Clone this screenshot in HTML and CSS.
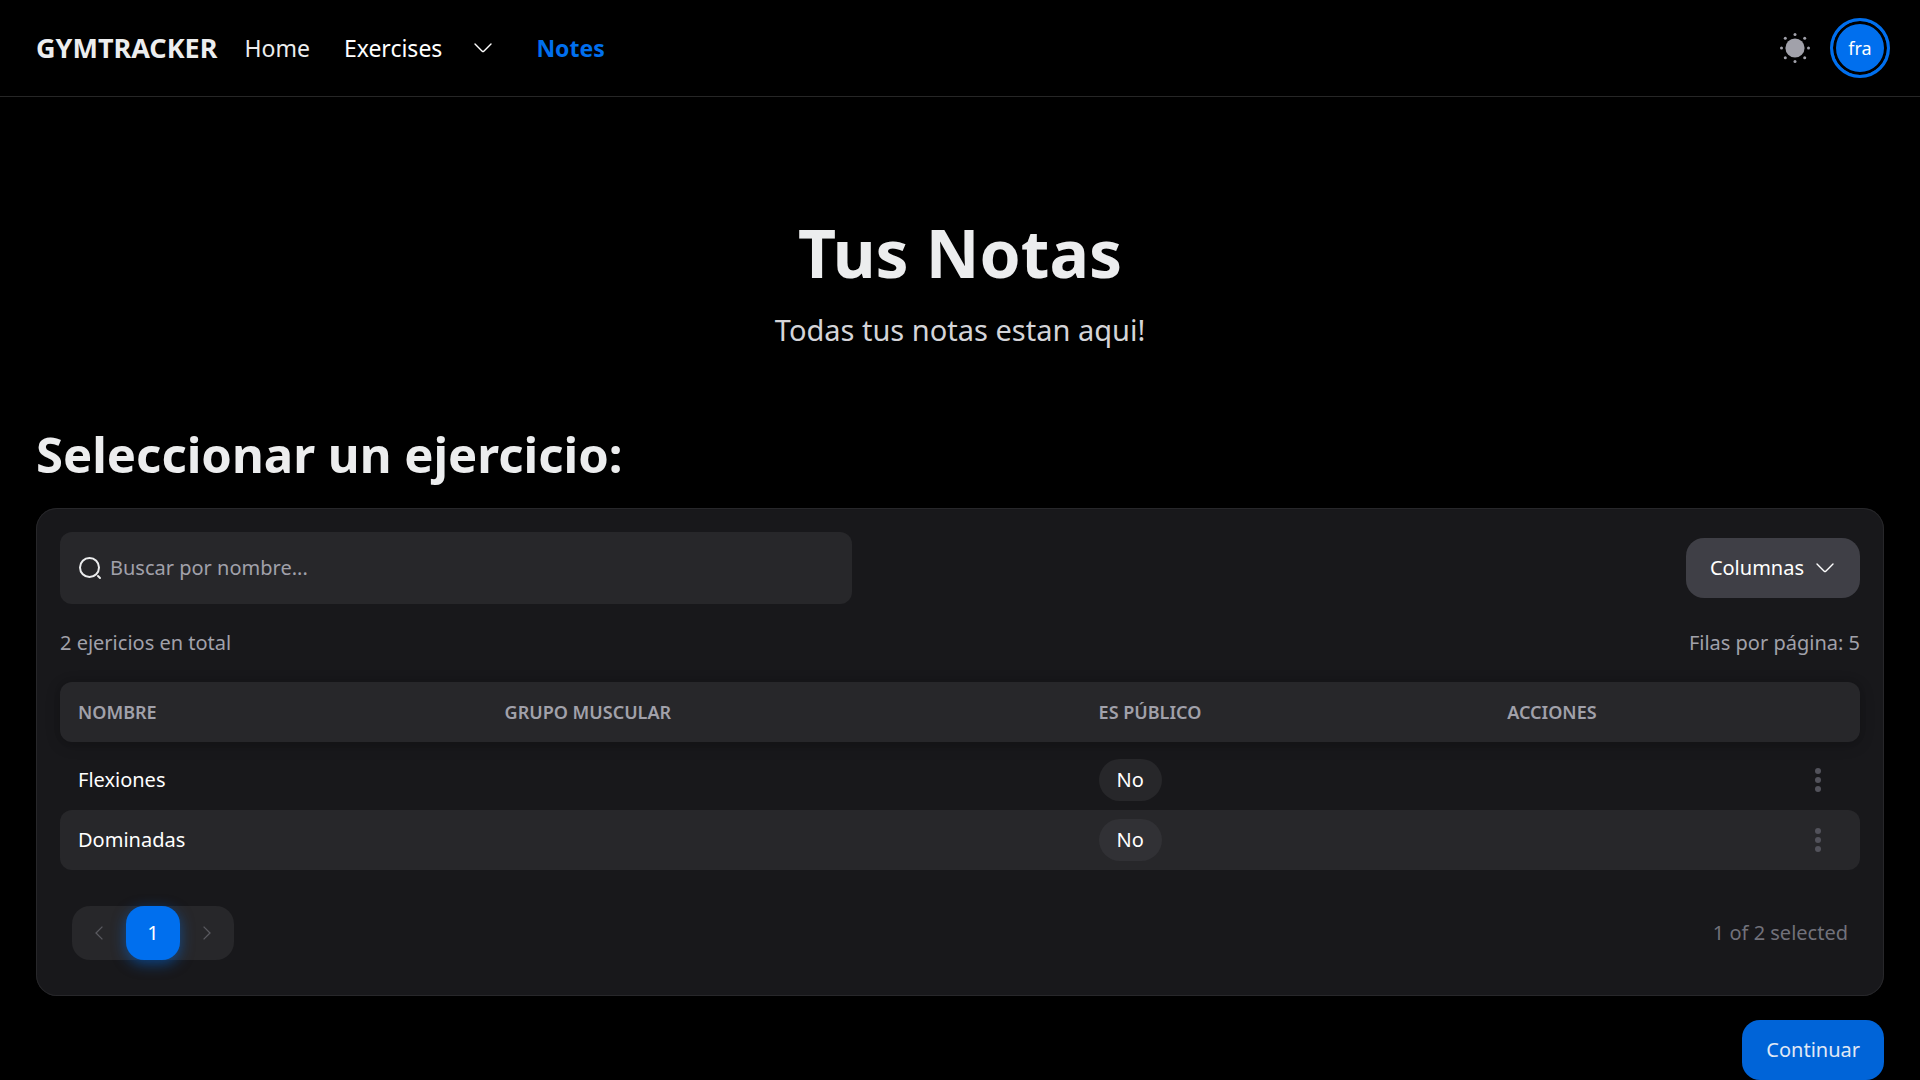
FILE: index.html
```html
<!DOCTYPE html>
<html lang="es">
<head>
<meta charset="utf-8">
<meta name="viewport" content="width=device-width, initial-scale=1">
<title>Gymtracker</title>
<link rel="stylesheet" href="styles.css">
</head>
<body>
<header class="navbar">
  <a class="brand" href="#">GYMTRACKER</a>
  <nav class="nav">
    <a class="nav-link" href="#">Home</a>
    <button class="nav-link nav-menu" type="button">Exercises
      <svg class="chevron" viewBox="0 0 18 10" aria-hidden="true"><path d="M1 1l7.2 7.2q.8.7 1.6 0L17 1"/></svg>
    </button>
    <a class="nav-link nav-active" href="#">Notes</a>
  </nav>
  <div class="nav-end">
    <button class="icon-button" type="button" aria-label="Cambiar tema">
      <svg class="sun" viewBox="0 0 30 30" aria-hidden="true">
        <circle cx="15" cy="15" r="9.6"/>
        <circle cx="15" cy="1.5" r="1.5"/><circle cx="15" cy="28.5" r="1.5"/>
        <circle cx="1.5" cy="15" r="1.5"/><circle cx="28.5" cy="15" r="1.5"/>
        <circle cx="5.3" cy="5.3" r="1.5"/><circle cx="24.7" cy="5.3" r="1.5"/>
        <circle cx="5.3" cy="24.7" r="1.5"/><circle cx="24.7" cy="24.7" r="1.5"/>
      </svg>
    </button>
    <button class="avatar" type="button">fra</button>
  </div>
</header>

<main class="page">
  <section class="hero">
    <h1 class="title">Tus Notas</h1>
    <p class="subtitle">Todas tus notas estan aqui!</p>
  </section>

  <h2 class="heading">Seleccionar un ejercicio:</h2>

  <section class="card">
    <div class="toolbar">
      <label class="search">
        <svg class="search-icon" viewBox="0 0 24 24" aria-hidden="true"><circle cx="11.5" cy="11.5" r="9.5"/><path d="M22 22L20 20"/></svg>
        <input class="search-input" type="text" placeholder="Buscar por nombre..." aria-label="Buscar por nombre">
      </label>
      <button class="button button-flat" type="button">Columnas
        <svg class="chevron" viewBox="0 0 18 10" aria-hidden="true"><path d="M1 1l7.2 7.2q.8.7 1.6 0L17 1"/></svg>
      </button>
    </div>
    <div class="summary">
      <span>2 ejericios en total</span>
      <span>Filas por página: 5</span>
    </div>
    <table class="table">
      <colgroup><col class="col-name"><col class="col-group"><col class="col-public"><col class="col-actions"></colgroup>
      <thead>
        <tr><th>NOMBRE</th><th>GRUPO MUSCULAR</th><th>ES PÚBLICO</th><th>ACCIONES</th></tr>
      </thead>
      <tbody>
        <tr>
          <td>Flexiones</td><td></td><td><span class="chip">No</span></td>
          <td class="actions"><button class="more" type="button" aria-label="Acciones de Flexiones"><svg class="dots" viewBox="0 0 6 24" aria-hidden="true"><circle cx="3" cy="3" r="3"/><circle cx="3" cy="12" r="3"/><circle cx="3" cy="21" r="3"/></svg></button></td>
        </tr>
        <tr class="row-hover">
          <td>Dominadas</td><td></td><td><span class="chip">No</span></td>
          <td class="actions"><button class="more" type="button" aria-label="Acciones de Dominadas"><svg class="dots" viewBox="0 0 6 24" aria-hidden="true"><circle cx="3" cy="3" r="3"/><circle cx="3" cy="12" r="3"/><circle cx="3" cy="21" r="3"/></svg></button></td>
        </tr>
      </tbody>
    </table>
    <div class="card-footer">
      <nav class="pagination" aria-label="Paginación">
        <button class="page-button" type="button" aria-label="Anterior"><svg class="arrow" viewBox="0 0 8 14" aria-hidden="true"><path d="M7.4.6L1 7l6.4 6.4"/></svg></button>
        <button class="page-button page-current" type="button" aria-current="page">1</button>
        <button class="page-button" type="button" aria-label="Siguiente"><svg class="arrow" viewBox="0 0 8 14" aria-hidden="true"><path d="M.6.6L7 7 .6 13.4"/></svg></button>
      </nav>
      <span class="selected">1 of 2 selected</span>
    </div>
  </section>

  <button class="button button-primary" type="button">Continuar</button>
</main>
</body>
</html>
```
FILE: styles.css
```css
* {
  box-sizing: border-box;
}

body {
  margin: 0;
  background: #000;
  color: #ecedee;
  font: 20px/30px "Noto Sans", "Open Sans", sans-serif;
}

button {
  padding: 0;
  border: 0;
  background: none;
  color: inherit;
  font: inherit;
  cursor: pointer;
}

a {
  color: inherit;
  text-decoration: none;
}

svg {
  display: block;
}

.navbar {
  display: flex;
  align-items: center;
  gap: 27px;
  height: 97px;
  padding: 0 30px 0 36px;
  border-bottom: 1px solid #262626;
}

.brand {
  font-size: 27px;
  font-weight: 700;
}

.nav {
  display: flex;
  align-items: center;
  gap: 34px;
  font-size: 23px;
}

.nav-menu {
  display: flex;
  align-items: center;
  gap: 32px;
  margin-right: 10px;
  color: #fff;
}

.nav-active {
  color: #006fee;
  font-weight: 700;
}

.chevron {
  width: 18px;
  height: 10px;
  fill: none;
  stroke: currentColor;
  stroke-width: 1.4;
  stroke-linecap: round;
}

.nav-end {
  display: flex;
  align-items: center;
  gap: 20px;
  margin-left: auto;
}

.sun {
  width: 30px;
  height: 30px;
  fill: #a1a1aa;
}

.avatar {
  width: 60px;
  height: 60px;
  border: 3px solid #006fee;
  border-radius: 50%;
  background: #006fee;
  box-shadow: inset 0 0 0 3px #000;
  color: #fff;
  font-size: 18px;
}

.page {
  display: flex;
  flex-direction: column;
  padding: 119px 36px 0;
}

.hero {
  text-align: center;
}

.title,
.subtitle,
.heading {
  margin: 0;
}

.title {
  font-size: 66px;
  line-height: 72px;
}

.subtitle {
  margin-top: 20px;
  color: #d4d4d8;
  font-size: 29px;
  line-height: 44px;
}

.heading {
  margin-top: 72px;
  font-size: 49px;
  line-height: 60px;
}

.card {
  margin-top: 24px;
  padding: 24px;
  border-radius: 21px;
  background: #18181b;
  box-shadow: inset 0 0 0 1px #27272a;
}

.toolbar,
.summary,
.card-footer {
  display: flex;
  align-items: center;
  justify-content: space-between;
}

.search {
  display: flex;
  align-items: center;
  gap: 8px;
  width: 44%;
  height: 72px;
  padding: 0 18px;
  border-radius: 12px;
  background: #27272a;
}

.search-icon {
  flex: none;
  width: 24px;
  height: 24px;
  fill: none;
  stroke: currentColor;
  stroke-width: 2;
  stroke-linecap: round;
}

.search-input {
  flex: 1;
  min-width: 0;
  padding: 0;
  border: 0;
  outline: 0;
  background: none;
  color: inherit;
  font: inherit;
}

.search-input::placeholder {
  color: #a1a1aa;
  opacity: 1;
}

.button {
  display: flex;
  align-items: center;
  gap: 12px;
  height: 60px;
  padding: 0 24px;
  border-radius: 18px;
}

.button-flat {
  padding-right: 26px;
  background: #3f3f46;
  color: #fff;
}

.button-primary {
  align-self: flex-end;
  margin-top: 24px;
  background: #0064d8;
  color: #e0e9f5;
}

.summary {
  margin: 24px 0;
  color: #a1a1aa;
}

.table {
  width: 100%;
  border-spacing: 0;
  table-layout: fixed;
}

.col-name {
  width: 23.7%;
}

.col-group {
  width: 33%;
}

.col-public {
  width: 22.7%;
}

.table th,
.table td {
  height: 60px;
  padding: 0 18px;
  text-align: left;
}

.table th {
  color: #a1a1aa;
  font-size: 18px;
  font-weight: 600;
}

.table td {
  color: #fff;
}

.table tr,
.table th:first-child,
.table td:first-child {
  border-top-left-radius: 12px;
  border-bottom-left-radius: 12px;
}

.table tr,
.table th:last-child,
.table td:last-child {
  border-top-right-radius: 12px;
  border-bottom-right-radius: 12px;
}

.table thead tr {
  background: #27272a;
  box-shadow: 0 0 8px rgba(0, 0, 0, 0.05), 0 3px 15px rgba(0, 0, 0, 0.2);
}

.table tbody::before {
  content: "";
  display: block;
  height: 8px;
}

.row-hover {
  background: #27272a;
}

.chip {
  display: inline-block;
  height: 42px;
  padding: 0 18px;
  border-radius: 21px;
  background: #27272a;
  line-height: 42px;
  vertical-align: middle;
}

.row-hover .chip {
  background: #313135;
}

.more {
  display: flex;
  align-items: center;
  justify-content: center;
  width: 48px;
  height: 48px;
  margin-left: auto;
}

.dots {
  width: 6px;
  height: 24px;
  fill: #52525b;
}

.card-footer {
  padding: 36px 12px 12px;
}

.pagination {
  display: flex;
  border-radius: 18px;
  background: #27272a;
}

.page-button {
  display: flex;
  align-items: center;
  justify-content: center;
  width: 54px;
  height: 54px;
  border-radius: 18px;
}

.page-current {
  background: #006fee;
  box-shadow: 0 4px 14px rgba(0, 111, 238, 0.5);
  color: #fff;
}

.arrow {
  width: 8px;
  height: 14px;
  fill: none;
  stroke: #5a5a60;
  stroke-width: 1.3;
}

.selected {
  color: #71717a;
}
```
